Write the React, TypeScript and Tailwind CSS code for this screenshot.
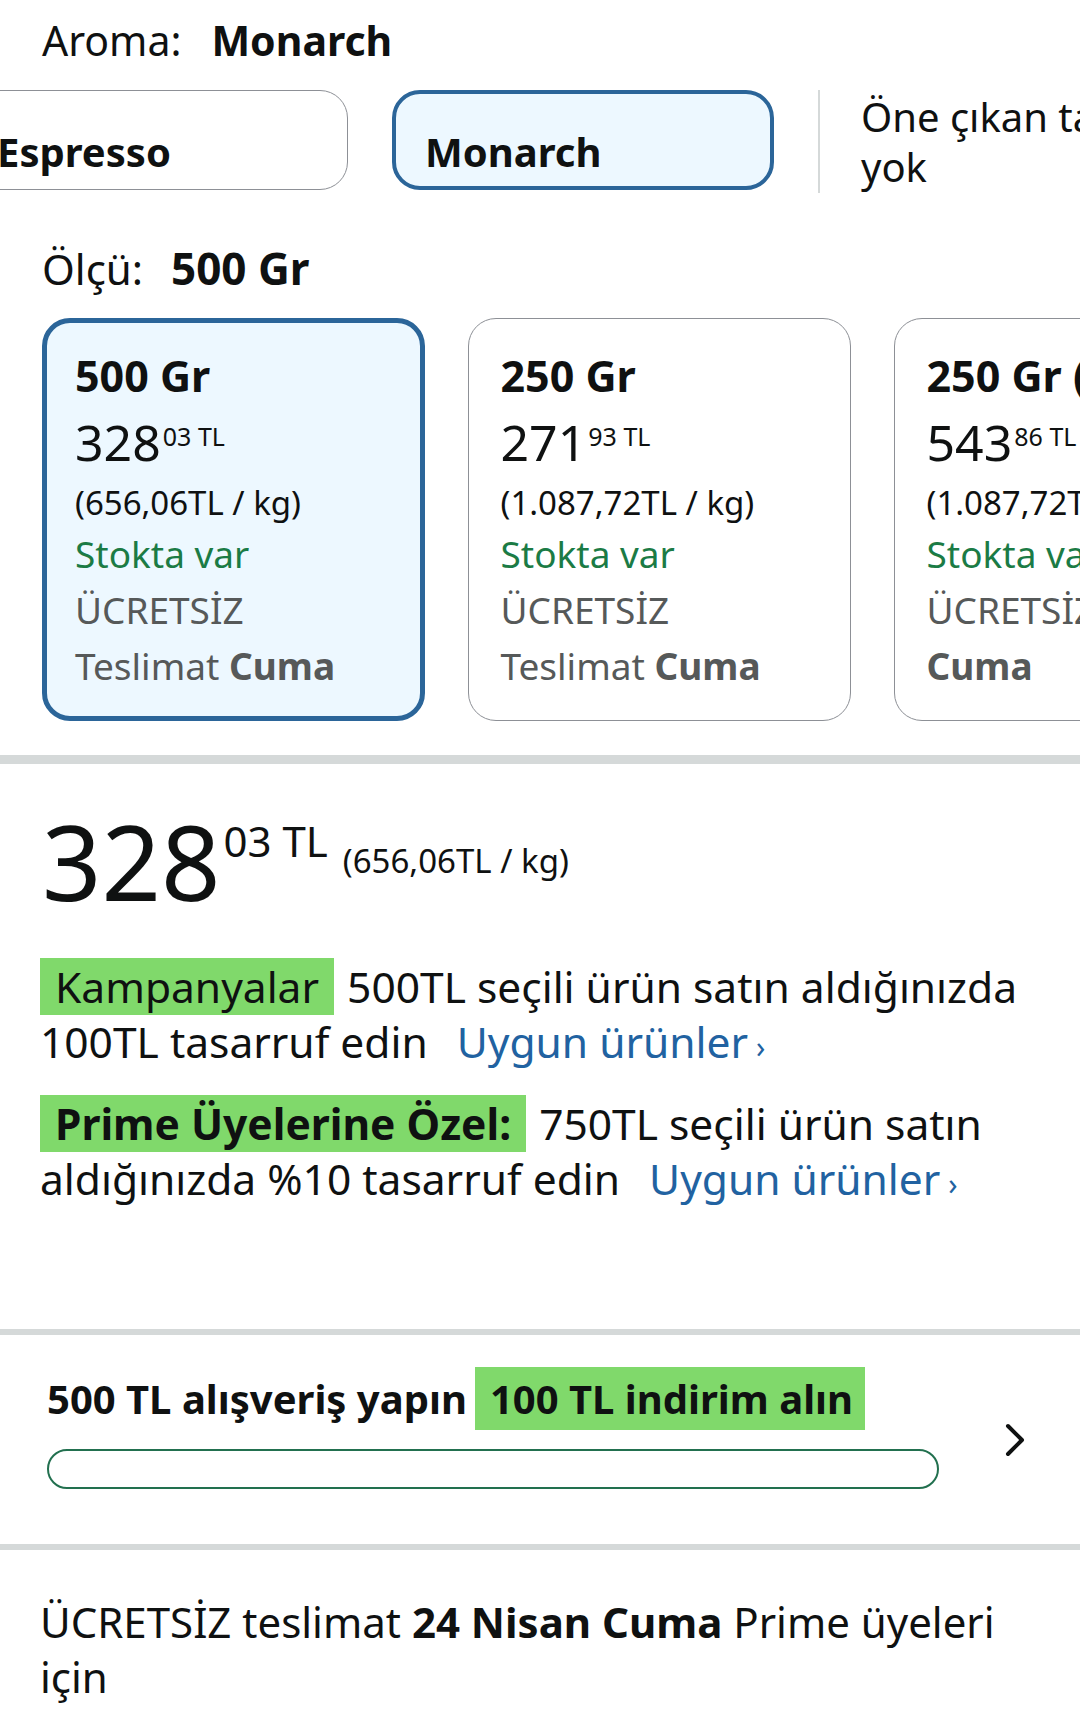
import clsx from "clsx";

type Card = {
  size: string;
  whole: string;
  frac: string;
  perKg: string;
  selected?: boolean;
  splitDelivery?: boolean;
};

const cards: Card[] = [
  { size: "500 Gr", whole: "328", frac: "03", perKg: "(656,06TL / kg)", selected: true },
  { size: "250 Gr", whole: "271", frac: "93", perKg: "(1.087,72TL / kg)" },
  { size: "250 Gr (2'li Paket)", whole: "543", frac: "86", perKg: "(1.087,72TL / kg)", splitDelivery: true },
];

function SizeCard({ card }: { card: Card }) {
  return (
    <div
      className={clsx(
        "h-[403px] w-[383px] shrink-0 overflow-hidden whitespace-nowrap rounded-[28px]",
        card.selected
          ? "border-[5px] border-[#2b6599] bg-[#edf8ff] pl-[28px] pt-[25px]"
          : "border-[1.5px] border-[#8d9096] bg-white pl-[31.5px] pt-[28.5px]"
      )}
    >
      <div className="text-[43px] font-bold leading-[56px]">{card.size}</div>
      <div className="flex h-[75px] items-start pt-[3px]">
        <span className="text-[50px] leading-[70px]">{card.whole}</span>
        <span className="ml-[2px] mt-[18px] text-[25px] leading-[23px]">{card.frac} TL</span>
      </div>
      <div className="text-[33px] leading-[47px]">{card.perKg}</div>
      <div className="text-[37px] leading-[56px] text-[#1b7b45]">Stokta var</div>
      {card.splitDelivery ? (
        <>
          <div className="text-[37px] leading-[56px] text-[#565959]">ÜCRETSİZ Teslimat</div>
          <div className="text-[37px] font-bold leading-[56px] text-[#565959]">Cuma</div>
        </>
      ) : (
        <>
          <div className="text-[37px] leading-[56px] text-[#565959]">ÜCRETSİZ</div>
          <div className="text-[37px] leading-[56px] text-[#565959]">
            Teslimat <span className="font-bold">Cuma</span>
          </div>
        </>
      )}
    </div>
  );
}

function Link() {
  return (
    <span className="ml-[18px] whitespace-nowrap text-[#2162a1]">
      Uygun ürünler<span className="ml-[8px] text-[30px] leading-none">›</span>
    </span>
  );
}

export default function App() {
  return (
    <div className="min-h-[1732px] w-[1080px] overflow-hidden bg-white font-['Noto_Sans',sans-serif] text-[#0f1111]">
      {/* Aroma */}
      <div className="pl-[42px] pt-[12px] text-[41px] leading-[56px]">
        Aroma:<span className="ml-[30px] font-bold">Monarch</span>
      </div>

      <div className="mt-[22px] flex h-[100px] items-start">
        <div className="-ml-[35px] flex h-[100px] w-[383px] shrink-0 items-center rounded-[28px] border-[1.5px] border-[#8d9096] pl-[31px] pt-[24px] text-[40px] font-bold leading-[56px]">
          Espresso
        </div>
        <div className="ml-[44px] flex h-[100px] w-[382px] shrink-0 items-center rounded-[28px] border-4 border-[#2b6599] bg-[#edf8ff] pl-[29px] pt-[24px] text-[40px] font-bold leading-[56px]">
          Monarch
        </div>
        <div className="ml-[44px] h-[103px] w-[2px] shrink-0 bg-[#d5d9d9]" />
        <div className="ml-[41px] shrink-0 whitespace-nowrap pt-[2px] text-[40px] leading-[50px]">
          Öne çıkan tat notu
          <br />
          yok
        </div>
      </div>

      {/* Ölçü */}
      <div className="mt-[50px] pl-[42px] text-[42px] leading-[56px]">
        Ölçü:<span className="ml-[28px] text-[44px] font-bold">500 Gr</span>
      </div>

      <div className="ml-[42px] mt-[21px] flex gap-[43px]">
        {cards.map((c) => (
          <SizeCard key={c.whole} card={c} />
        ))}
      </div>

      <div className="mt-[34px] h-[9px] bg-[#d5d9d9]" />

      {/* Price */}
      <div className="mt-[45px] flex items-start pl-[42px]">
        <span className="text-[104px] leading-[104px]">328</span>
        <span className="ml-[3px] mt-[11px] text-[42px] leading-[42px]">03 TL</span>
        <span className="ml-[15px] mt-[35px] text-[33px] leading-[33px]">(656,06TL / kg)</span>
      </div>

      <p className="mt-[46px] px-[40px] text-[42.5px] leading-[55px]">
        <span className="mr-[2px] bg-[#80d96b] px-[15px]">Kampanyalar</span> 500TL seçili ürün satın
        aldığınızda 100TL tasarruf edin <Link />
      </p>

      <p className="mt-[27px] px-[40px] text-[42.5px] leading-[55px]">
        <span className="mr-[2px] bg-[#80d96b] px-[15px] font-bold">Prime Üyelerine Özel:</span> 750TL
        seçili ürün satın aldığınızda %10 tasarruf edin <Link />
      </p>

      <div className="mt-[123px] h-[6px] bg-[#d5d9d9]" />

      {/* Promo progress */}
      <div className="mt-[32px] flex items-start pl-[47px]">
        <div className="w-[892px] shrink-0">
          <div className="flex h-[63px] items-center whitespace-nowrap text-[40px] font-bold">
            <span>500 TL alışveriş yapın</span>
            <span className="ml-[8px] flex h-[63px] items-center bg-[#80d96b] pl-[15px] pr-[12px]">
              100 TL indirim alın
            </span>
          </div>
          <div className="mt-[19px] h-[40px] rounded-full border-[2.5px] border-[#22704f]" />
        </div>
        <svg className="ml-[66px] mt-[56px] shrink-0" width="20" height="34" viewBox="0 0 20 34">
          <path
            d="M3 3 L17 17 L3 31"
            stroke="#0f1111"
            strokeWidth="4"
            fill="none"
            strokeLinecap="round"
            strokeLinejoin="round"
          />
        </svg>
      </div>

      <div className="mt-[55px] h-[6px] bg-[#d5d9d9]" />

      <p className="mt-[44px] px-[40px] text-[42px] leading-[55px]">
        ÜCRETSİZ teslimat <span className="font-bold">24 Nisan Cuma</span> Prime üyeleri
        <br />
        için
      </p>
    </div>
  );
}
